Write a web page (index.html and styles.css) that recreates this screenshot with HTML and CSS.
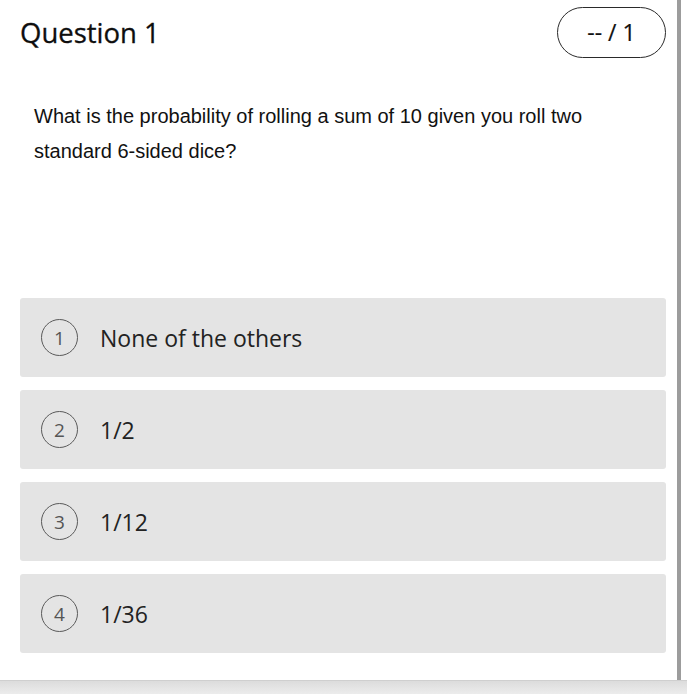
FILE: index.html
```html
<!DOCTYPE html>
<html>
<head>
<meta charset="utf-8">
<link rel="stylesheet" href="styles.css">
</head>
<body>
<div class="frame">
  <div class="panel">
    <header class="head">
      <h1 class="title">Question 1</h1>
      <div class="score">-- / 1</div>
    </header>
    <p class="prompt">What is the probability of rolling a sum of 10 given you roll two standard 6-sided dice?</p>
    <ol class="options">
      <li class="option"><span class="num">1</span><span class="label">None of the others</span></li>
      <li class="option"><span class="num">2</span><span class="label">1/2</span></li>
      <li class="option"><span class="num">3</span><span class="label">1/12</span></li>
      <li class="option"><span class="num">4</span><span class="label">1/36</span></li>
    </ol>
  </div>
  <div class="bottom"></div>
</div>
</body>
</html>
```
FILE: styles.css
```css
html, body {
  margin: 0;
  padding: 0;
  background: #ffffff;
}
.frame {
  width: 687px;
  height: 700px;
  display: flex;
  flex-direction: column;
}
.panel {
  width: 681px;
  height: 680px;
  flex: none;
  box-sizing: border-box;
  border-right: 4px solid #9c9c9c;
  padding: 7px 0 0 20px;
}
.head {
  display: flex;
  justify-content: space-between;
  align-items: center;
  height: 50px;
  width: 646px;
}
.title {
  margin: 0;
  font-family: "Open Sans", sans-serif;
  font-weight: 400;
  font-size: 27.5px;
  color: #0e0e0e;
  -webkit-text-stroke: 0.3px #0e0e0e;
}
.score {
  box-sizing: border-box;
  width: 109px;
  height: 51px;
  border: 1.5px solid #2a2a2a;
  border-radius: 26px;
  display: flex;
  align-items: center;
  justify-content: center;
  font-family: "Open Sans", sans-serif;
  font-size: 23px;
  color: #111;
  -webkit-text-stroke: 0.2px #111;
}
.prompt {
  margin: 42px 0 0 14px;
  width: 600px;
  font-family: "Liberation Sans", Arial, sans-serif;
  font-size: 20px;
  line-height: 35px;
  color: #111;
}
.options {
  list-style: none;
  margin: 129px 0 0 0;
  padding: 0;
  display: flex;
  flex-direction: column;
  gap: 13px;
  width: 646px;
}
.option {
  height: 79px;
  background: #e4e4e4;
  border-radius: 3px;
  display: flex;
  align-items: center;
  padding-left: 21px;
}
.num {
  box-sizing: border-box;
  width: 37px;
  height: 37px;
  border: 1.5px solid #5a5a5a;
  border-radius: 50%;
  display: flex;
  align-items: center;
  justify-content: center;
  font-family: "Open Sans", sans-serif;
  font-size: 19px;
  color: #555;
}
.label {
  margin-left: 22px;
  font-family: "Open Sans", sans-serif;
  font-size: 23px;
  color: #222;
}
.bottom {
  height: 13px;
  border-top: 1px solid #cfcfcf;
  background: linear-gradient(#dcdcdc, #ececec);
}
```
